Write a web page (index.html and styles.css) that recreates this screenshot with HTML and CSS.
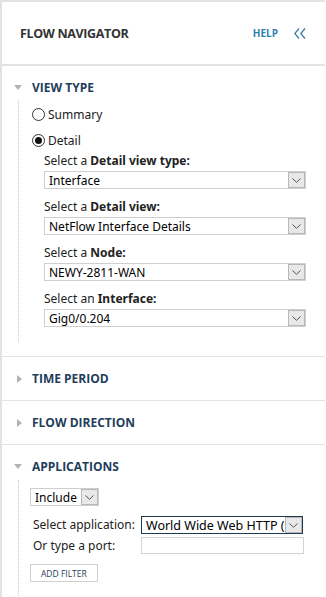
FILE: index.html
```html
<!DOCTYPE html>
<html lang="en">
<head>
    <meta charset="UTF-8">
    <meta name="viewport" content="width=device-width, initial-scale=1.0">
    <title>Flow Navigator</title>
    <link rel="stylesheet" href="styles.css">
</head>
<body>
<div class="panel">
    <div class="nav-header">
        <span class="nav-title">FLOW NAVIGATOR</span>
        <a class="help" href="#">HELP</a>
        <svg class="collapse" width="12" height="11" viewBox="0 0 12 11">
            <polyline points="5,0.5 0.8,5.5 5,10.5" fill="none" stroke="#3a7fa5" stroke-width="1.3"/>
            <polyline points="11,0.5 6.8,5.5 11,10.5" fill="none" stroke="#3a7fa5" stroke-width="1.3"/>
        </svg>
    </div>

    <!-- View type -->
    <div class="section">
        <div class="section-head">
            <span class="tri down"></span>
            <span class="section-title">VIEW TYPE</span>
        </div>
        <div class="section-body view-body">
            <label class="radio"><span class="dot"></span>Summary</label>
            <label class="radio"><span class="dot on"></span>Detail</label>
            <div class="fields">
                <div class="field">
                    <div class="lbl">Select a <b>Detail view type:</b></div>
                    <div class="select"><span class="val">Interface</span><span class="arrow"><svg width="9" height="5" viewBox="0 0 9 5"><polyline points="0.5,0.5 4.5,4.3 8.5,0.5" fill="none" stroke="#555" stroke-width="1"/></svg></span></div>
                </div>
                <div class="field">
                    <div class="lbl">Select a <b>Detail view:</b></div>
                    <div class="select"><span class="val">NetFlow Interface Details</span><span class="arrow"><svg width="9" height="5" viewBox="0 0 9 5"><polyline points="0.5,0.5 4.5,4.3 8.5,0.5" fill="none" stroke="#555" stroke-width="1"/></svg></span></div>
                </div>
                <div class="field">
                    <div class="lbl">Select a <b>Node:</b></div>
                    <div class="select"><span class="val">NEWY-2811-WAN</span><span class="arrow"><svg width="9" height="5" viewBox="0 0 9 5"><polyline points="0.5,0.5 4.5,4.3 8.5,0.5" fill="none" stroke="#555" stroke-width="1"/></svg></span></div>
                </div>
                <div class="field">
                    <div class="lbl">Select an <b>Interface:</b></div>
                    <div class="select"><span class="val">Gig0/0.204</span><span class="arrow"><svg width="9" height="5" viewBox="0 0 9 5"><polyline points="0.5,0.5 4.5,4.3 8.5,0.5" fill="none" stroke="#555" stroke-width="1"/></svg></span></div>
                </div>
            </div>
        </div>
    </div>

    <div class="section">
        <div class="section-head">
            <span class="tri right"></span>
            <span class="section-title">TIME PERIOD</span>
        </div>
    </div>

    <div class="section">
        <div class="section-head">
            <span class="tri right"></span>
            <span class="section-title">FLOW DIRECTION</span>
        </div>
    </div>

    <!-- Applications -->
    <div class="section last">
        <div class="section-head">
            <span class="tri down"></span>
            <span class="section-title">APPLICATIONS</span>
        </div>
        <div class="section-body app-body">
            <div class="select small"><span class="val">Include</span><span class="arrow"><svg width="9" height="5" viewBox="0 0 9 5"><polyline points="0.5,0.5 4.5,4.3 8.5,0.5" fill="none" stroke="#555" stroke-width="1"/></svg></span></div>
            <div class="app-grid">
                <span class="app-lbl">Select application:</span>
                <div class="select focus"><span class="val">World Wide Web HTTP (</span><span class="arrow"><svg width="9" height="5" viewBox="0 0 9 5"><polyline points="0.5,0.5 4.5,4.3 8.5,0.5" fill="none" stroke="#555" stroke-width="1"/></svg></span></div>
                <span class="app-lbl">Or type a port:</span>
                <input class="port" type="text">
            </div>
            <button class="add-btn" type="button">ADD FILTER</button>
        </div>
    </div>
</div>
</body>
</html>
```

FILE: styles.css
```css
body {
    margin: 0;
    font-family: "Open Sans", sans-serif;
    background: #fff;
}

.panel {
    width: 325px;
    height: 597px;
    border-left: 2px solid #e3e3e3;
    border-top: 2px solid #e3e3e3;
    box-sizing: border-box;
    overflow: hidden;
}

/* En-tete */
.nav-header {
    height: 62px;
    border-bottom: 2px solid #e3e3e3;
    display: flex;
    align-items: center;
    padding: 0 19px 0 18px;
}
.nav-title {
    font-weight: bold;
    font-size: 12.5px;
    letter-spacing: -0.35px;
    color: #333;
    flex: 1;
}
.help {
    font-weight: bold;
    font-size: 10px;
    color: #2f7fae;
    text-decoration: none;
    margin-right: 16px;
}
.collapse {
    display: block;
}

/* Sections */
.section {
    border-bottom: 1px solid #e3e3e3;
}
.section.last {
    border-bottom: none;
}
.section-head {
    height: 43px;
    display: flex;
    align-items: center;
    padding-left: 12px;
}
.section-title {
    font-weight: bold;
    font-size: 12px;
    color: #1f3d5c;
}
.tri {
    width: 0;
    height: 0;
    margin-right: 10px;
}
.tri.down {
    border-left: 4px solid transparent;
    border-right: 4px solid transparent;
    border-top: 5px solid #b3b3b3;
}
.tri.right {
    border-top: 4px solid transparent;
    border-bottom: 4px solid transparent;
    border-left: 5px solid #b3b3b3;
    margin-left: 3px;
}

.section-body {
    margin-left: 16px;
    border-left: 1px dotted #c8c8c8;
    font-family: "Noto Sans", sans-serif;
    font-size: 12px;
    color: #222;
}
.view-body {
    margin-top: -8px;
    margin-bottom: 14px;
    padding: 0 0 15px 13px;
}

.radio {
    display: flex;
    align-items: center;
    height: 26px;
    font-size: 12px;
}
.dot {
    width: 11px;
    height: 11px;
    border: 1px solid #333;
    border-radius: 50%;
    margin-right: 3px;
    box-sizing: content-box;
    display: flex;
    align-items: center;
    justify-content: center;
}
.dot.on::after {
    content: "";
    width: 7px;
    height: 7px;
    border-radius: 50%;
    background: #111;
}

.fields {
    padding-left: 12px;
    padding-right: 19px;
}
.field {
    margin-top: 10px;
}
.field:first-child {
    margin-top: 0;
}
.lbl {
    line-height: 16px;
    margin-bottom: 2px;
}
.lbl b {
    font-weight: bold;
}

/* Listes deroulantes */
.select {
    display: flex;
    align-items: center;
    height: 18px;
    box-sizing: border-box;
    border: 1px solid #cfcfcf;
    background: #fff;
    color: #000;
    font-size: 12px;
}
.select .val {
    flex: 1;
    padding-left: 4px;
    white-space: nowrap;
    overflow: hidden;
}
.select .arrow {
    width: 15px;
    height: 14px;
    background: #e8e8e8;
    border: 1px solid #b8b8b8;
    display: flex;
    align-items: center;
    justify-content: center;
}
.select.focus {
    border-color: #1f3a4e;
}
.select.focus .val {
    font-size: 12.5px;
}
.select.small {
    width: 69px;
}

.app-body {
    margin-top: -8px;
    padding: 8px 0 16px 11px;
}
.app-grid {
    display: grid;
    grid-template-columns: 108px 162px;
    row-gap: 3px;
    align-items: center;
    margin-top: 10px;
    padding-left: 3px;
}
.app-lbl {
    line-height: 16px;
}
.port {
    height: 17px;
    border: 1px solid #d3d3d3;
    padding: 0;
    box-sizing: border-box;
    width: 163px;
}
.add-btn {
    display: block;
    margin-top: 10px;
    font-family: "Open Sans", sans-serif;
    font-size: 8.5px;
    color: #1f3d5c;
    background: #fff;
    border: 1px solid #d0d0d0;
    height: 18px;
    padding: 0 10px;
}
```
